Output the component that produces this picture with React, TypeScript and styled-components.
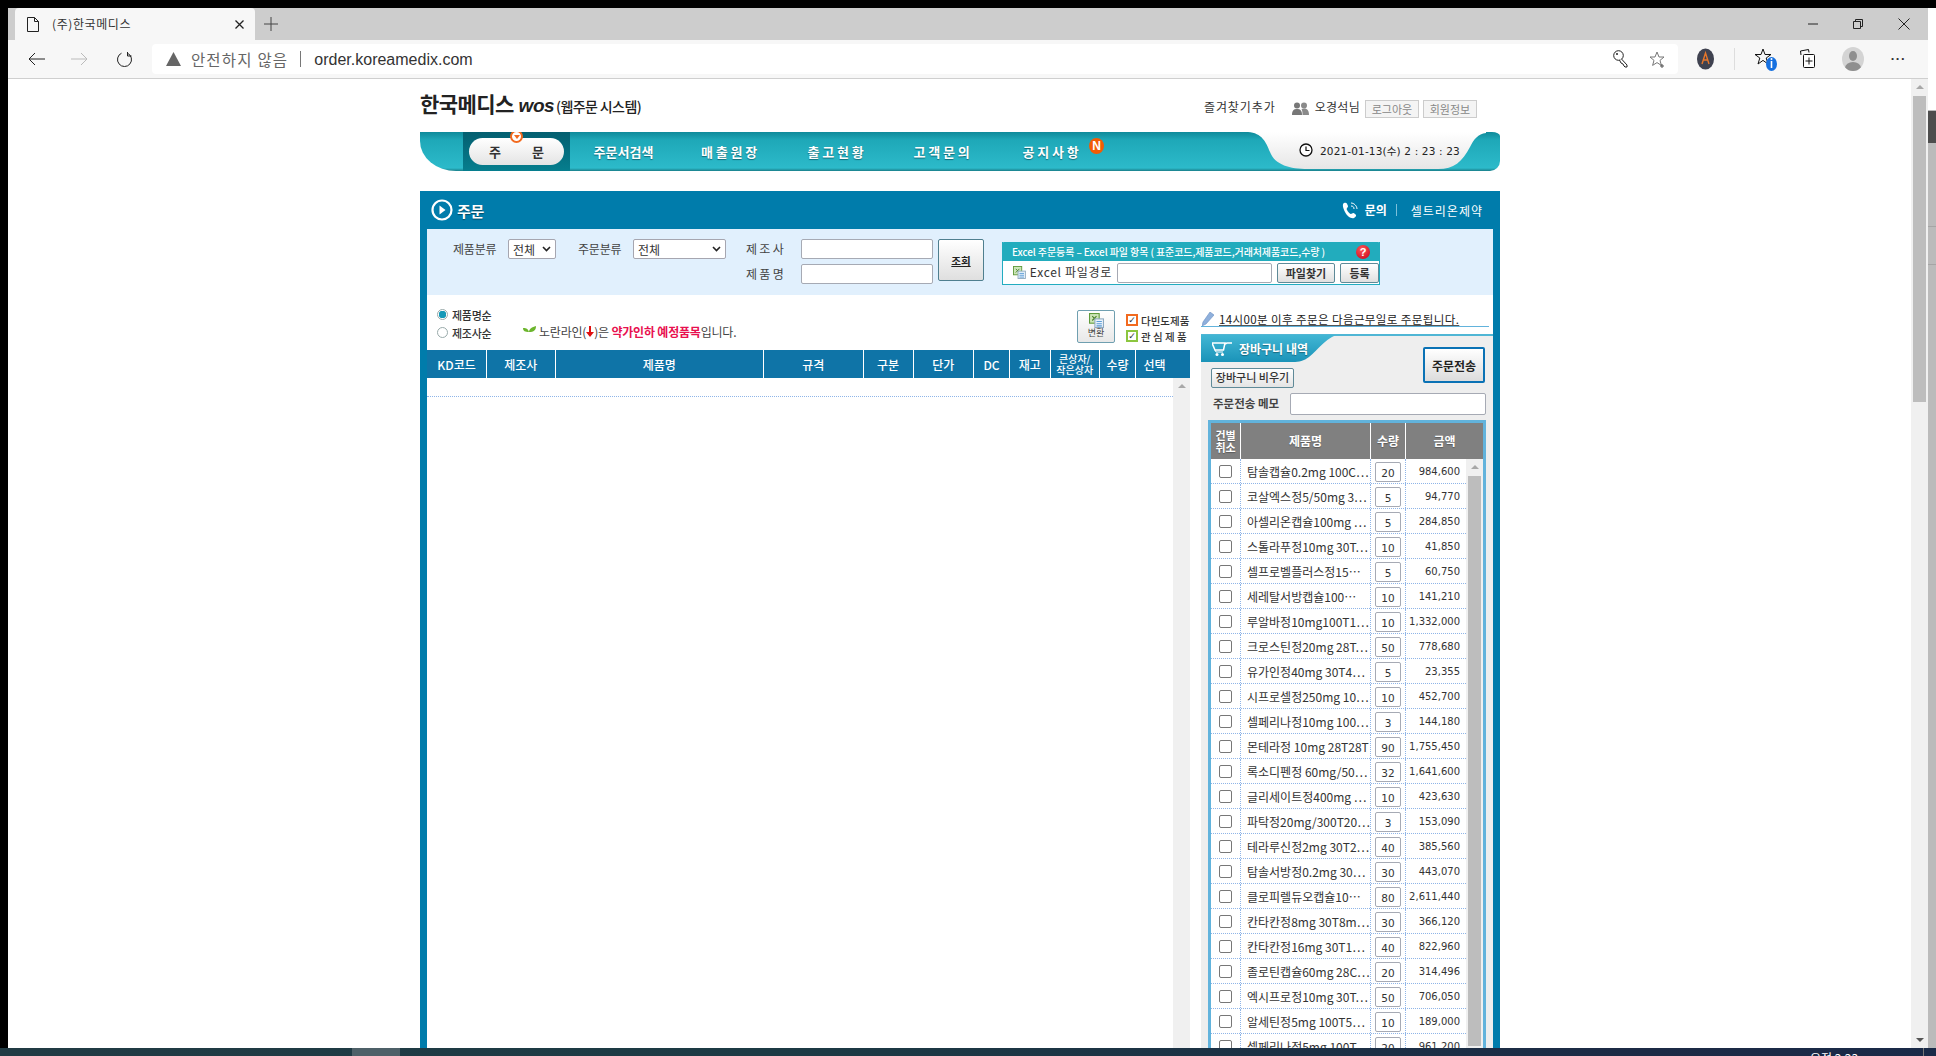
import React from "react";
import styled, { createGlobalStyle } from "styled-components";

const KR = `"Noto Sans CJK KR", "Noto Sans", sans-serif`;
const DIGIT = `"DejaVu Sans", "Noto Sans CJK KR", sans-serif`;

const Global = createGlobalStyle`
  html, body { margin: 0; padding: 0; height: 100%; overflow: hidden; background: #000; }
  * { box-sizing: border-box; }
  body { font-family: ${KR}; font-size: 12px; color: #333; }
`;

const Screen = styled.div`
  width: 1936px; height: 1056px; display: flex; flex-direction: column; padding-top: 8px; background: #000; overflow: hidden;
`;
const Window = styled.div`
  flex: 1; min-height: 0; margin-left: 8px; display: flex; background: #fff;
`;
const Browser = styled.div`
  width: 1920px; flex: none; display: flex; flex-direction: column;
`;
const TabStrip = styled.div`
  height: 32px; background: #cdcdcd; display: flex; align-items: stretch; padding-left: 7px; flex: none;
`;
const Tab = styled.div`
  width: 240px; height: 32px; background: #f7f7f7; border-radius: 4px 4px 0 0; display: flex; align-items: center; padding: 0 11px 0 12px; gap: 13px; color: #333;
`;
const TabTitle = styled.span`
  flex: 1; font-size: 12px; letter-spacing: 0.6px; white-space: nowrap; padding-bottom: 2px;
`;
const NewTab = styled.div`
  margin-left: 9px; width: 14px; display: flex; align-items: center;
`;
const WinControls = styled.div`
  margin-left: auto; display: flex; align-items: center; gap: 35px; padding-right: 18px;
`;
const Toolbar = styled.div`
  height: 39px; background: #f7f7f7; border-bottom: 1px solid #cfcfcf; display: flex; align-items: center; padding: 0 22px 0 20px; flex: none;
`;
const NavIcons = styled.div`
  display: flex; align-items: center; gap: 26px; width: 124px;
  & > svg:last-child { margin-left: 2px; }
`;
const Address = styled.div`
  width: 1527px; height: 30px; background: #fff; border-radius: 4px; display: flex; align-items: center; padding: 0 12px 0 14px;
`;
const Insecure = styled.span`
  margin-left: 10px; color: #666; font-size: 15.5px; letter-spacing: 1.2px; white-space: nowrap;
`;
const UrlSep = styled.span`
  width: 1px; height: 16px; background: #777; margin: 0 13px 0 12px;
`;
const Url = styled.span`
  font-family: "Liberation Sans", sans-serif; font-size: 16px; color: #333; flex: 1; padding-top: 1px;
`;
const AddressIcons = styled.div`
  display: flex; align-items: center; gap: 20px;
`;
const ToolIcons = styled.div`
  display: flex; align-items: center; margin-left: 19px;
`;
const ToolSep = styled.span`
  width: 1px; height: 22px; background: #ddd; margin: 0 20px;
`;
const Gap = styled.span<{ $w: number }>`
  width: ${p => p.$w}px;
`;
const Avatar = styled.div`
  width: 22px; height: 24px; border-radius: 50%; background: #d4d4d4; position: relative; overflow: hidden; flex: none;
  &::before { content: ""; position: absolute; left: 7px; top: 4px; width: 8px; height: 10px; border-radius: 50%; background: #8f8f8f; }
  &::after { content: ""; position: absolute; left: 3px; top: 15px; width: 16px; height: 12px; border-radius: 50%; background: #8f8f8f; }
`;
const Dots = styled.span`
  margin-left: 27px; color: #333; font: 700 13px "Liberation Sans", sans-serif; letter-spacing: 1.5px; line-height: 8px; padding-bottom: 6px;
`;

const Body = styled.div`
  flex: 1; min-height: 0; display: flex; background: #fff;
`;
const PageArea = styled.div`
  width: 1903px; padding-left: 412px; overflow: hidden;
`;
const Content = styled.div`
  width: 1080px;
`;
const VScroll = styled.div`
  width: 17px; background: #f0f0f0; position: relative; padding: 17px 2px 0; flex: none;
`;
const ArrowUp = styled.i`
  position: absolute; left: 50%; top: 6px; margin-left: -4px; width: 0; height: 0;
  border-left: 4px solid transparent; border-right: 4px solid transparent; border-bottom: 4px solid #a8a8a8;
`;
const ArrowDown = styled.i`
  position: absolute; left: 50%; bottom: 6px; margin-left: -4px; width: 0; height: 0;
  border-left: 4px solid transparent; border-right: 4px solid transparent; border-top: 4px solid #555;
`;
const Thumb = styled.div<{ $h: number }>`
  width: 100%; height: ${p => p.$h}px; background: #bdbdbd;
`;
const OuterEdge = styled.div`
  width: 8px; background: #fff; padding-top: 102px; flex: none; display: flex; flex-direction: column;
`;
const EdgeDark = styled.div`
  height: 33px; background: #4d4d4d; border-top: 1px solid #bbb; flex: none;
`;
const EdgeBar = styled.div<{ $h?: number }>`
  ${p => p.$h ? `height:${p.$h}px; flex: none; border-bottom: 1px solid #a5a5a5;` : "flex: 1;"} background: #bbb;
`;

const TopBar = styled.div`
  height: 53px; display: flex; justify-content: space-between; align-items: flex-start; padding-right: 23px;
`;
const Logo = styled.div`
  display: flex; align-items: baseline; padding-top: 10px; color: #222; white-space: nowrap;
`;
const LogoKo = styled.span`
  font-size: 21px; font-weight: 700; letter-spacing: -0.6px; line-height: 28px;
`;
const LogoWos = styled.span`
  font: italic 700 19px "Liberation Sans", sans-serif; margin-left: 5px; letter-spacing: -0.5px;
`;
const LogoSub = styled.span`
  font-size: 14px; font-weight: 500; letter-spacing: -0.6px; margin-left: 2px;
`;
const UserBox = styled.div`
  display: flex; align-items: center; padding-top: 19px; color: #333; font-size: 12px;
`;
const Fav = styled.span`
  margin-right: 16px; letter-spacing: 0.9px; padding-bottom: 4px;
`;
const UserName = styled.span`
  margin: 0 5px 0 6px; letter-spacing: 0.3px; padding-bottom: 4px;
`;
const SmallBtn = styled.span`
  width: 54px; height: 18px; margin-right: 4px; border: 1px solid #ccc; background: #f4f4f4; color: #888; font-size: 11px; display: flex; align-items: center; justify-content: center;
  &:last-child { margin-right: 0; }
`;

const NavBar = styled.nav`
  height: 39px; position: relative; display: flex; padding-left: 43px; border-radius: 0 8px 10px 36px / 0 4px 10px 30px; overflow: hidden;
  background: linear-gradient(#0f8a9a 0, #1ea8b8 8px, #2cbaca 36px, #1a7f8a 39px);
`;
const NavActive = styled.div`
  width: 107px; background: linear-gradient(#045f70, #067e8e); padding: 6px; flex: none;
`;
const Pill = styled.div`
  height: 27px; border-radius: 14px; background: linear-gradient(#fff, #e4e4e4); display: flex; align-items: center; justify-content: space-between; padding: 0 20px; font-size: 13px; font-weight: 700; color: #333;
`;
const NavMark = styled.i`
  position: absolute; left: 90px; top: -2px; width: 13px; height: 13px; border-radius: 50%; border: 2px solid #f26a1f; background: #fff;
  &::after { content: ""; position: absolute; left: 2px; top: 3px; border-left: 3px solid transparent; border-right: 3px solid transparent; border-top: 4px solid #f26a1f; }
`;
const NavList = styled.div`
  display: flex; position: relative;
`;
const NavItem = styled.span<{ $sp?: number; $w: number }>`
  width: ${p => p.$w}px; height: 39px; display: flex; align-items: center; justify-content: center; color: #fff; font-size: 13px; font-weight: 700; text-shadow: 0 1px 1px rgba(0,60,70,.6); letter-spacing: ${p => p.$sp ?? 0}px; white-space: nowrap; position: relative;
`;
const NewBadge = styled.i`
  position: absolute; right: 4px; top: 6px; width: 15px; height: 16px; border-radius: 50%; background: #f25c05; color: #fff; font: 700 12px "Liberation Sans", sans-serif; display: flex; align-items: center; justify-content: center; text-shadow: none; letter-spacing: 0;
`;
const ClockShape = styled.svg`
  position: absolute; left: 828px; top: 0;
`;
const ClockBox = styled.div`
  position: absolute; left: 879px; top: 0; height: 36px; display: flex; align-items: center; gap: 7px; color: #222; font-family: ${DIGIT}; font-size: 10.5px; letter-spacing: 0.15px; white-space: nowrap;
`;

const Panel = styled.section`
  margin-top: 20px; background: #007cab; padding: 0 7px;
`;
const PanelHead = styled.header`
  height: 38px; display: flex; align-items: center; color: #fff; padding: 0 10px 0 4px;
`;
const PanelTitle = styled.h1`
  margin: 0 0 0 4px; font-size: 15px; font-weight: 700; text-shadow: 0 1px 1px rgba(0,0,0,.4); letter-spacing: -0.3px;
`;
const HeadRight = styled.div`
  margin-left: auto; display: flex; align-items: center; font-size: 12px; letter-spacing: 1px;
`;
const Inquiry = styled.span`
  font-weight: 700; margin-left: 6px; padding-bottom: 2px; letter-spacing: 0;
`;
const HeadSep = styled.span`
  width: 1px; height: 12px; background: #7cc0da; margin: 0 14px 0 9px;
`;
const SearchBar = styled.div`
  height: 66px; background: #e1f0fd; display: flex; align-items: flex-start; padding: 10px 0 0 26px; color: #444;
`;
const SLabel = styled.label<{ $w: number; $mr?: number }>`
  width: ${p => p.$w}px; height: 20px; line-height: 19px; font-size: 12px; letter-spacing: -0.2px; white-space: nowrap; margin-right: ${p => p.$mr ?? 12}px; flex: none;
`;
const SelectBox = styled.div<{ $w: number; $mr: number }>`
  width: ${p => p.$w}px; height: 20px; margin-right: ${p => p.$mr}px; border: 1px solid #a6a6b0; border-radius: 2px; background: #fff; display: flex; align-items: center; justify-content: space-between; padding: 0 4px; color: #333; font-size: 12px; flex: none;
`;
const StackCol = styled.div`
  display: flex; flex-direction: column; gap: 5px; flex: none;
`;
const StackRow = styled.div`
  display: flex; align-items: center;
`;
const TextField = styled.div<{ $w: number; $h?: number }>`
  width: ${p => p.$w}px; height: ${p => p.$h ?? 20}px; background: #fff; border: 1px solid #a6aab4; border-radius: 2px; flex: none;
`;
const SearchBtn = styled.button`
  width: 46px; height: 42px; margin-left: 5px; border: 1px solid #4f7f8f; border-radius: 2px; background: linear-gradient(#fff, #dfdfdf); font: 700 10.5px ${KR}; color: #222; padding: 0; text-decoration: underline; flex: none;
`;
const ExcelBox = styled.div`
  width: 378px; height: 43px; margin: 3px 0 0 18px; border: 1px solid #22acc0; border-top: 0; background: #fff; flex: none;
`;
const ExcelHead = styled.div`
  height: 19px; margin: 0 -1px; background: #22acbd; color: #fff; border-radius: 2px 2px 0 0; font-size: 10px; font-weight: 500; display: flex; align-items: center; padding: 0 8px 0 10px; white-space: nowrap; letter-spacing: -0.1px;
`;
const QMark = styled.i`
  margin-left: auto; margin-right: 2px; width: 14px; height: 14px; border-radius: 50%; background: radial-gradient(circle at 40% 30%, #f55, #c8001a); color: #fff; font: 700 11px "Liberation Sans", sans-serif; display: flex; align-items: center; justify-content: center;
`;
const ExcelRow = styled.div`
  height: 23px; display: flex; align-items: center; padding-left: 10px; font-size: 12px; color: #333; white-space: nowrap;
`;
const ExcelLabel = styled.span`
  margin: 0 5px 0 4px; letter-spacing: 0.7px; padding-bottom: 3px;
`;
const MiniBtn = styled.button<{ $w: number }>`
  width: ${p => p.$w}px; height: 20px; margin-left: 5px; border: 1px solid #5f8a98; border-radius: 2px; background: linear-gradient(#fff, #e0e0e0); font: 700 11px ${KR}; color: #333; padding: 0; flex: none;
`;

const Main = styled.div`
  display: flex; gap: 11px; background: #fff; align-items: flex-start;
`;
const LeftCol = styled.div`
  width: 763px; flex: none;
`;
const Options = styled.div`
  height: 55px; display: flex; align-items: flex-start; padding: 12px 0 0 10px; position: relative;
`;
const RadioCol = styled.div`
  display: flex; flex-direction: column; gap: 3px; width: 86px; font-size: 11px; font-weight: 500; color: #333;
`;
const RadioRow = styled.label`
  height: 15px; display: flex; align-items: center; gap: 4px; white-space: nowrap; letter-spacing: -0.3px;
`;
const Radio = styled.i<{ $on?: boolean }>`
  width: 11px; height: 11px; border-radius: 50%; border: 1px solid #9aa; background: ${p => p.$on ? "radial-gradient(circle, #1699b8 0 3.5px, #fff 4px)" : "#fff"}; flex: none;
`;
const Note = styled.div`
  display: flex; align-items: center; gap: 3px; height: 15px; margin-top: 17px; font-size: 12px; color: #444; white-space: nowrap; letter-spacing: -0.2px;
`;
const Hot = styled.b`
  color: #e8104f; font-weight: 700;
`;
const OptRight = styled.div`
  margin-left: auto; display: flex; align-items: flex-start; margin-top: 3px;
`;
const ConvertBtn = styled.div`
  width: 38px; height: 33px; border: 1px solid #6f9fb0; border-radius: 2px; background: linear-gradient(#fff, #e8e8e8); display: flex; flex-direction: column; align-items: center; font-size: 9px; color: #444; line-height: 10px; padding-top: 2px; gap: 0;
`;
const Checks = styled.div`
  display: flex; flex-direction: column; margin: 3px 0 0 11px; gap: 2px; font-size: 10.5px; font-weight: 500; color: #333;
`;
const CheckRow = styled.label`
  height: 14px; width: 64px; display: flex; align-items: center; gap: 3px; white-space: nowrap;
`;
const ColorCheck = styled.i<{ $c: string }>`
  width: 12px; height: 12px; border: 2px solid ${p => p.$c}; background: #fff; color: #333; font: 700 9px/8px "DejaVu Sans", sans-serif; text-align: center; flex: none;
`;
const GridHead = styled.div`
  height: 28px; display: grid; grid-template-columns: 60px 68.5px 208.5px 99.5px 50px 60.5px 36px 40.5px 49.5px 36px 54px; background: #0f74a7; color: #fff; font-size: 12px; text-align: center;
`;
const GridCell = styled.div<{ $small?: boolean }>`
  display: flex; align-items: center; justify-content: center; border-right: 1px solid #fff; line-height: 11px; white-space: pre-line; font-size: ${p => p.$small ? 10 : 12}px; font-weight: 500;
  &:last-child { border-right: 0; padding-right: 17px; }
`;
const GridBody = styled.div`
  display: flex; height: 670px;
`;
const GridRows = styled.div`
  flex: 1;
`;
const EmptyRow = styled.div`
  height: 19px; border-bottom: 1px dotted #8fb5e8;
`;
const RightCol = styled.div`
  width: 292px; flex: none;
`;
const Notice = styled.div`
  height: 32px; margin-right: 4px; margin-bottom: 7px; border-bottom: 1px solid #62b3dc; display: flex; align-items: flex-end; gap: 5px; padding: 0 0 0 1px; font-size: 11.5px; line-height: 14px; color: #222; text-decoration: underline; text-decoration-color: #555; white-space: nowrap; letter-spacing: 0.4px;
`;
const Cart = styled.div`
  background: #eee; border-top: 2px solid #4fb6d5;
`;
const CartTop = styled.div`
  height: 52px; display: flex; justify-content: space-between; align-items: flex-start;
`;
const CartTabs = styled.div`
  display: flex; flex-direction: column; align-items: flex-start;
`;
const CartTab = styled.div`
  width: 135px; height: 27px; margin-top: -1px; background: linear-gradient(#42b6d4, #1a93b8); clip-path: path("M0 0 L135 0 C 122 6, 118 14, 108 22 C 103 26, 98 27, 92 27 L0 27 Z"); display: flex; align-items: center; gap: 7px; padding-left: 11px; color: #fff; font-size: 12px; font-weight: 700; text-shadow: 0 1px 1px rgba(0,0,0,.35); white-space: nowrap;
`;
const ClearBtn = styled.button`
  width: 83px; height: 20px; margin: 6px 0 0 10px; border: 1px solid #5f8a98; border-radius: 2px; background: linear-gradient(#fff, #e4e4e4); font: 500 11px/16px ${KR}; color: #333; padding: 0 0 2px;
`;
const SendBtn = styled.button`
  width: 62px; height: 36px; margin: 11px 8px 0 0; border: 2px solid #0a72b5; border-radius: 2px; background: linear-gradient(#fff, #dcdcdc); font: 700 12px ${KR}; color: #222; padding: 0;
`;
const MemoRow = styled.div`
  height: 22px; margin-top: 5px; display: flex; align-items: center; justify-content: space-between; padding: 0 7px 0 12px; font-size: 11.5px; font-weight: 700; color: #444;
`;
const MemoLabel = styled.span`
  padding-bottom: 2px;
`;
const CartTable = styled.div`
  margin: 5px 7px 0; border: 3px solid #62b3dc; background: #fff;
`;
const CartHead = styled.div`
  height: 36px; display: grid; grid-template-columns: 30px 130px 35px 77px; background: #808080; color: #fff; font-size: 12px; font-weight: 700; text-shadow: 0 1px 1px rgba(0,0,0,.3);
`;
const CartHeadCell = styled.div<{ $small?: boolean }>`
  display: flex; align-items: center; justify-content: center; text-align: center; border-right: 1px solid #fff; white-space: pre-line; line-height: 12px; font-size: ${p => p.$small ? 11 : 12}px;
  &:last-child { border-right: 0; padding-right: 0; }
`;
const CartBody = styled.div`
  display: flex; align-items: stretch;
`;
const CartRows = styled.div`
  width: 255px; flex: none;
`;
const CartRow = styled.div`
  height: 25px; display: grid; grid-template-columns: 30px 130px 35px 60px; border-bottom: 1px dotted #8fb5e8;
`;
const CheckCell = styled.div`
  display: flex; align-items: center; justify-content: center; border-right: 1px dotted #8fb5e8;
`;
const CheckBox = styled.i`
  width: 13px; height: 13px; border: 1px solid #777; border-radius: 2px; background: #fff;
`;
const NameCell = styled.div`
  display: flex; align-items: center; padding-left: 6px; border-right: 1px dotted #8fb5e8; font-size: 12px; color: #333; white-space: nowrap; overflow: hidden;
`;
const QtyCell = styled.div`
  display: flex; align-items: center; justify-content: center; border-right: 1px dotted #8fb5e8;
`;
const QtyBox = styled.div`
  width: 26px; height: 20px; margin-top: 1px; border: 1px solid #a6aab4; border-radius: 2px; font-family: ${DIGIT}; font-size: 10.5px; line-height: 20px; text-align: center; color: #333;
`;
const AmountCell = styled.div`
  display: flex; align-items: center; justify-content: flex-end; padding-right: 6px; font-family: ${DIGIT}; font-size: 10px; color: #333; white-space: nowrap;
`;
const CartScroll = styled.div`
  width: 17px; background: #f0f0f0; position: relative; padding: 17px 2px 0;
`;

const Taskbar = styled.div`
  height: 8px; flex: none; overflow: hidden; display: flex; background: linear-gradient(90deg, #213b44, #1c3a44 40%, #1c2a45 85%, #1a2a48); position: relative;
`;
const TaskActive = styled.div`
  width: 48px; margin-left: 352px; background: #4e6068;
`;
const TaskClock = styled.span`
  position: absolute; left: 1810px; top: 3px; color: #fff; font-size: 12px; line-height: 14px; white-space: nowrap;
`;
const TaskEnd = styled.i`
  position: absolute; left: 1923px; top: 0; width: 1px; height: 8px; background: #777;
`;

const thin = { fill: "none", stroke: "#222", strokeWidth: 1 };

const XlsIcon = ({ s = 15 }: { s?: number }) => (
  <svg width={s} height={s} viewBox="0 0 14 14">
    <rect x="0.5" y="0.5" width="9" height="9" fill="#cde6b8" stroke="#5f9a3a" />
    <path d="M3 3l4 4M7 3l-4 4" stroke="#4b7f2b" />
    <rect x="5.5" y="5.5" width="8" height="8" fill="#eaf3fb" stroke="#8fa9bf" />
    <path d="M7 8h5M7 10h5M7 12h5" stroke="#5a9bd5" />
  </svg>
);

const rows: [string, string, string][] = [
  ["탐솔캡슐0.2mg 100C⋯", "20", "984,600"],
  ["코살엑스정5/50mg 3⋯", "5", "94,770"],
  ["아셀리온캡슐100mg ⋯", "5", "284,850"],
  ["스톨라푸정10mg 30T⋯", "10", "41,850"],
  ["셀프로벨플러스정15⋯", "5", "60,750"],
  ["세레탈서방캡슐100⋯", "10", "141,210"],
  ["루알바정10mg100T1⋯", "10", "1,332,000"],
  ["크로스틴정20mg 28T⋯", "50", "778,680"],
  ["유가인정40mg 30T4⋯", "5", "23,355"],
  ["시프로셀정250mg 10⋯", "10", "452,700"],
  ["셀페리나정10mg 100⋯", "3", "144,180"],
  ["몬테라정 10mg 28T28T", "90", "1,755,450"],
  ["록소디펜정 60mg/50⋯", "32", "1,641,600"],
  ["글리세이트정400mg ⋯", "10", "423,630"],
  ["파탁정20mg/300T20⋯", "3", "153,090"],
  ["테라루신정2mg 30T2⋯", "40", "385,560"],
  ["탐솔서방정0.2mg 30⋯", "30", "443,070"],
  ["클로피렐듀오캡슐10⋯", "80", "2,611,440"],
  ["칸타칸정8mg 30T8m⋯", "30", "366,120"],
  ["칸타칸정16mg 30T1⋯", "40", "822,960"],
  ["졸로틴캡슐60mg 28C⋯", "20", "314,496"],
  ["엑시프로정10mg 30T⋯", "50", "706,050"],
  ["알세틴정5mg 100T5⋯", "10", "189,000"],
  ["셀페리나정5mg 100T⋯", "20", "961,200"],
];

const gridCols: [string, boolean?][] = [
  ["KD코드"], ["제조사"], ["제품명"], ["규격"], ["구분"], ["단가"], ["DC"], ["재고"], ["큰상자/\n작은상자", true], ["수량"], ["선택"],
];

const Chevron = () => (
  <svg width="9" height="6" viewBox="0 0 9 6"><path d="M1 1l3.5 3.5L8 1" fill="none" stroke="#222" strokeWidth="1.6" /></svg>
);

export default function App() {
  return (
    <Screen>
      <Global />
      <Window>
        <Browser>
          <TabStrip>
            <Tab>
              <svg width="12" height="15" viewBox="0 0 12 15"><path d="M.5.5h7l4 4v10H.5zM7.5.5v4h4" {...thin} /></svg>
              <TabTitle>(주)한국메디스</TabTitle>
              <svg width="9" height="9" viewBox="0 0 9 9"><path d="M.5.5l8 8M8.5.5l-8 8" stroke="#222" strokeWidth="1.3" /></svg>
            </Tab>
            <NewTab>
              <svg width="14" height="14" viewBox="0 0 14 14"><path d="M7 0v14M0 7h14" stroke="#444" /></svg>
            </NewTab>
            <WinControls>
              <svg width="10" height="2" viewBox="0 0 10 2"><path d="M0 1h10" stroke="#222" /></svg>
              <svg width="10" height="10" viewBox="0 0 10 10"><path d="M.5 2.5h7v7h-7zM2.5 2.5v-2h7v7h-2" {...thin} /></svg>
              <svg width="12" height="12" viewBox="0 0 12 12"><path d="M.5.5l11 11M11.5.5l-11 11" stroke="#222" /></svg>
            </WinControls>
          </TabStrip>
          <Toolbar>
            <NavIcons>
              <svg width="17" height="14" viewBox="0 0 17 14"><path d="M17 7H1M7 1L1 7l6 6" {...thin} /></svg>
              <svg width="17" height="14" viewBox="0 0 17 14"><path d="M0 7h16M10 1l6 6-6 6" fill="none" stroke="#bbb" /></svg>
              <svg width="17" height="17" viewBox="0 0 17 17"><path d="M5.5 2.2A7 7 0 1 0 11.5 2.2M11.5 1v4h4" {...thin} /></svg>
            </NavIcons>
            <Address>
              <svg width="15" height="14" viewBox="0 0 15 14"><path d="M7.5 0L15 14H0z" fill="#666" /></svg>
              <Insecure>안전하지 않음</Insecure>
              <UrlSep />
              <Url>order.koreamedix.com</Url>
              <AddressIcons>
                <svg width="16" height="18" viewBox="0 0 16 18"><circle cx="5.5" cy="5.5" r="4.8" fill="#fff" stroke="#222" /><path d="M8.5 9L14 15v2h-2l-1-1-1-2-2-1-1.5-3" fill="#fff" stroke="#222" /><circle cx="4" cy="4" r="1" fill="#222" /></svg>
                <svg width="17" height="17" viewBox="0 0 17 17"><path d="M8 1l2 5h5l-4 3.4 1.4 5L8 11.6 3.6 14.4 5 9.4 1 6h5z" fill="none" stroke="#777" /><path d="M13 13v4M11 15h4" stroke="#555" /></svg>
              </AddressIcons>
            </Address>
            <ToolIcons>
              <svg width="17" height="22" viewBox="0 0 17 22"><ellipse cx="8.5" cy="11" rx="8.5" ry="10.5" fill="#3f4250" /><path d="M5 16L8.5 5 12 16M6 12h5" fill="none" stroke="#e8772a" strokeWidth="1.4" /></svg>
              <ToolSep />
              <svg width="22" height="24" viewBox="0 0 22 24"><path d="M8 2l2 5.5h6l-4.8 3.5 1.8 6-5-3.6-5 3.6 1.8-6L0 7.5h6z" fill="none" stroke="#111" /><ellipse cx="16.5" cy="17" rx="5.5" ry="7" fill="#1670e0" /><path d="M16.5 14v7" stroke="#fff" strokeWidth="1.6" /><circle cx="16.5" cy="12" r="1" fill="#fff" /></svg>
              <Gap $w={23} />
              <svg width="15" height="20" viewBox="0 0 15 20"><path d="M1 6l-.5-4 8-1.5.5 3" fill="none" stroke="#111" /><rect x="3.5" y="5.5" width="11" height="13" rx="1" fill="#fff" stroke="#111" /><path d="M9 8.5v7M5.5 12h7" stroke="#111" /></svg>
              <Gap $w={27} />
              <Avatar />
              <Dots>...</Dots>
            </ToolIcons>
          </Toolbar>
          <Body>
            <PageArea>
              <Content>
                <TopBar>
                  <Logo>
                    <LogoKo>한국메디스</LogoKo>
                    <LogoWos>wos</LogoWos>
                    <LogoSub>(웹주문 시스템)</LogoSub>
                  </Logo>
                  <UserBox>
                    <Fav>즐겨찾기추가</Fav>
                    <svg width="17" height="13" viewBox="0 0 17 13"><circle cx="5" cy="3.5" r="3" fill="#777" /><path d="M0 13c0-5 2-6 5-6s5 1 5 6z" fill="#777" /><circle cx="12" cy="3.5" r="3" fill="#8a8a8a" /><path d="M10.5 13c.2-3-.5-5-1-6 3-1 7.5-1 7.5 6z" fill="#8a8a8a" /></svg>
                    <UserName>오경석님</UserName>
                    <SmallBtn>로그아웃</SmallBtn>
                    <SmallBtn>회원정보</SmallBtn>
                  </UserBox>
                </TopBar>
                <NavBar>
                  <NavActive>
                    <Pill><span>주</span><span>문</span></Pill>
                  </NavActive>
                  <NavMark />
                  <NavList>
                    <NavItem $w={107}>주문서검색</NavItem>
                    <NavItem $w={107} $sp={2.8}>매출원장</NavItem>
                    <NavItem $w={106} $sp={2.8}>출고현황</NavItem>
                    <NavItem $w={106} $sp={2.8}>고객문의</NavItem>
                    <NavItem $w={112} $sp={2.8}>공지사항<NewBadge>N</NewBadge></NavItem>
                  </NavList>
                  <ClockShape width="252" height="39" viewBox="0 0 252 39">
                    <defs>
                      <linearGradient id="clockfill" x1="0" y1="0" x2="0" y2="1"><stop offset="0" stopColor="#fff" /><stop offset="1" stopColor="#e6e6e6" /></linearGradient>
                    </defs>
                    <path d="M0 0 C 14 1, 18 10, 22 20 C 27 33, 42 37, 60 37 L 190 37 C 206 37, 214 30, 222 15 C 226 7, 230 2, 238 1 L 238 0 Z" fill="url(#clockfill)" />
                  </ClockShape>
                  <ClockBox>
                    <svg width="14" height="14" viewBox="0 0 14 14"><circle cx="7" cy="7" r="6" fill="#fff" stroke="#111" strokeWidth="1.3" /><path d="M7 3.5V7.5H10.5" fill="none" stroke="#111" strokeWidth="1.2" /></svg>
                    2021-01-13(수) 2 : 23 : 23
                  </ClockBox>
                </NavBar>
                <Panel>
                  <PanelHead>
                    <svg width="22" height="22" viewBox="0 0 22 22"><circle cx="11" cy="11" r="9.5" fill="none" stroke="#fff" strokeWidth="2.2" /><path d="M8.5 6.5v9l6-4.5z" fill="#fff" /></svg>
                    <PanelTitle>주문</PanelTitle>
                    <HeadRight>
                      <svg width="17" height="18" viewBox="0 0 17 18"><path d="M2 2c3-1 3 1 4 3 0 2-2 2-1 4s3 4 4 4 2-2 4 0c2 1 1 3-1 4-3 1-7-2-9-6S0 3 2 2z" fill="#fff" /><path d="M9 2c3 0 6 3 6 6M9 5c2 0 3 1 3 3" fill="none" stroke="#fff" /></svg>
                      <Inquiry>문의</Inquiry>
                      <HeadSep />
                      셀트리온제약
                    </HeadRight>
                  </PanelHead>
                  <SearchBar>
                    <SLabel $w={43}>제품분류</SLabel>
                    <SelectBox $w={48} $mr={22}>전체<Chevron /></SelectBox>
                    <SLabel $w={43}>주문분류</SLabel>
                    <SelectBox $w={93} $mr={20}>전체<Chevron /></SelectBox>
                    <StackCol>
                      <StackRow><SLabel $w={43}>제 조 사</SLabel><TextField $w={132} /></StackRow>
                      <StackRow><SLabel $w={43}>제 품 명</SLabel><TextField $w={132} /></StackRow>
                    </StackCol>
                    <SearchBtn>조회</SearchBtn>
                    <ExcelBox>
                      <ExcelHead>Excel 주문등록 – Excel 파일 항목 ( 표준코드,제품코드,거래처제품코드,수량 )<QMark>?</QMark></ExcelHead>
                      <ExcelRow>
                        <XlsIcon />
                        <ExcelLabel>Excel 파일경로</ExcelLabel>
                        <TextField $w={155} />
                        <MiniBtn $w={58}>파일찾기</MiniBtn>
                        <MiniBtn $w={39}>등록</MiniBtn>
                      </ExcelRow>
                    </ExcelBox>
                  </SearchBar>
                  <Main>
                    <LeftCol>
                      <Options>
                        <RadioCol>
                          <RadioRow><Radio $on />제품명순</RadioRow>
                          <RadioRow><Radio />제조사순</RadioRow>
                        </RadioCol>
                        <Note>
                          <svg width="13" height="11" viewBox="0 0 13 11"><path d="M6 11V6C5 2 2 2 0 2c0 3 2 4 6 4 0-3 3-5 7-6 0 4-2 6-7 6" fill="#6cb52d" /></svg>
                          <span>노란라인(<svg width="8" height="11" viewBox="0 0 8 11"><path d="M3 0h2v6h3l-4 5-4-5h3z" fill="#e01010" /></svg>)은 <Hot>약가인하 예정품목</Hot>입니다.</span>
                        </Note>
                        <OptRight>
                          <ConvertBtn><XlsIcon />변환</ConvertBtn>
                          <Checks>
                            <CheckRow><ColorCheck $c="#f26a1f">✓</ColorCheck>다빈도제품</CheckRow>
                            <CheckRow><ColorCheck $c="#8cc63f">✓</ColorCheck>관 심 제 품</CheckRow>
                          </Checks>
                        </OptRight>
                      </Options>
                      <GridHead>
                        {gridCols.map(([t, s]) => <GridCell key={t} $small={s}>{t}</GridCell>)}
                      </GridHead>
                      <GridBody>
                        <GridRows><EmptyRow /></GridRows>
                        <VScroll><ArrowUp /></VScroll>
                      </GridBody>
                    </LeftCol>
                    <RightCol>
                      <Notice>
                        <svg width="12" height="14" viewBox="0 0 12 14"><path d="M8 0l4 3-8 9-4 2 1-4z" fill="#8fb0dc" stroke="#6a8fc2" strokeWidth=".6" /></svg>
                        14시00분 이후 주문은 다음근무일로 주문됩니다.
                      </Notice>
                      <Cart>
                        <CartTop>
                          <CartTabs>
                            <CartTab>
                              <svg width="20" height="14" viewBox="0 0 20 14"><path d="M0 1h13l-1.5 7H3zM13 2l2-1h5" fill="none" stroke="#fff" strokeWidth="1.5" /><path d="M3 8l1 2h7" fill="none" stroke="#fff" /><circle cx="5" cy="12.5" r="1.5" fill="#fff" /><circle cx="10.5" cy="12.5" r="1.5" fill="#fff" /></svg>
                              장바구니 내역
                            </CartTab>
                            <ClearBtn>장바구니 비우기</ClearBtn>
                          </CartTabs>
                          <SendBtn>주문전송</SendBtn>
                        </CartTop>
                        <MemoRow><MemoLabel>주문전송 메모</MemoLabel><TextField $w={196} $h={22} /></MemoRow>
                        <CartTable>
                          <CartHead>
                            <CartHeadCell $small>{"건별\n취소"}</CartHeadCell>
                            <CartHeadCell>제품명</CartHeadCell>
                            <CartHeadCell>수량</CartHeadCell>
                            <CartHeadCell>금액</CartHeadCell>
                          </CartHead>
                          <CartBody>
                            <CartRows>
                              {rows.map(([n, q, a]) => (
                                <CartRow key={n}>
                                  <CheckCell><CheckBox /></CheckCell>
                                  <NameCell>{n}</NameCell>
                                  <QtyCell><QtyBox>{q}</QtyBox></QtyCell>
                                  <AmountCell>{a}</AmountCell>
                                </CartRow>
                              ))}
                            </CartRows>
                            <CartScroll><ArrowUp /><Thumb $h={570} /></CartScroll>
                          </CartBody>
                        </CartTable>
                      </Cart>
                    </RightCol>
                  </Main>
                </Panel>
              </Content>
            </PageArea>
            <VScroll><ArrowUp /><Thumb $h={306} /><ArrowDown /></VScroll>
          </Body>
        </Browser>
        <OuterEdge>
          <EdgeDark />
          <EdgeBar $h={84} />
          <EdgeBar $h={38} />
          <EdgeBar />
        </OuterEdge>
      </Window>
      <Taskbar>
        <TaskActive />
        <TaskClock>오전 2:23</TaskClock>
        <TaskEnd />
      </Taskbar>
    </Screen>
  );
}
